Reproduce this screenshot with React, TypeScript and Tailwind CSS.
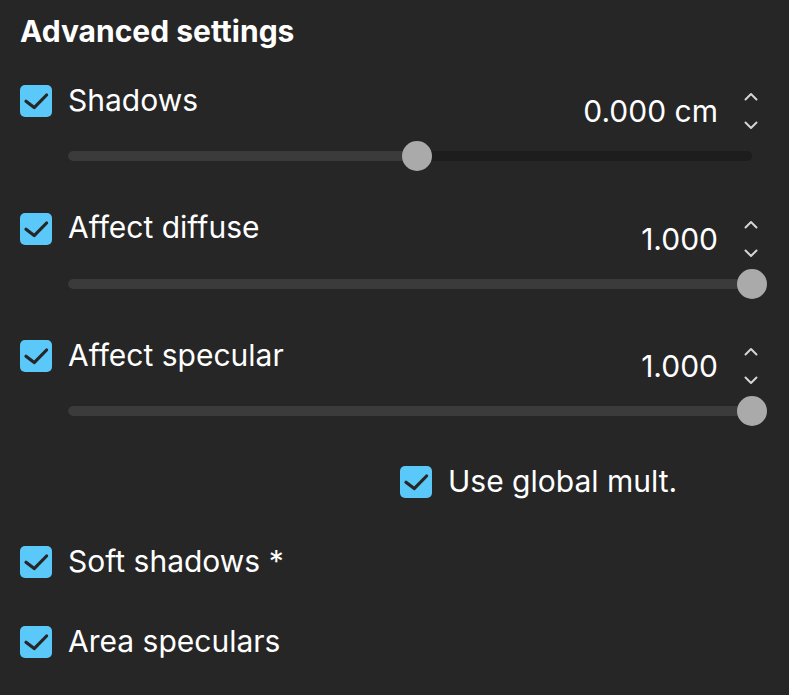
import { useState } from "react";

type SliderRowProps = {
  label: string;
  value: string;
  fraction: number;
};

function CheckBox() {
  return (
    <span className="grid h-8 w-8 shrink-0 place-items-center rounded-[5px] bg-[#5ac8f8]">
      <svg width="32" height="32" viewBox="0 0 32 32" fill="none">
        <path d="M6 16.2 L14.2 22.6 L26.6 10" stroke="#262626" strokeWidth="3.2" strokeLinecap="round" strokeLinejoin="round" />
      </svg>
    </span>
  );
}

function Spinner() {
  return (
    <div className="flex flex-col items-center gap-[20px]">
      <svg width="14" height="9" viewBox="0 0 14 9" fill="none">
        <path d="M1.5 7.5 L7 2 L12.5 7.5" stroke="#d4d4d4" strokeWidth="2" strokeLinecap="round" strokeLinejoin="round" />
      </svg>
      <svg width="14" height="9" viewBox="0 0 14 9" fill="none">
        <path d="M1.5 1.5 L7 7 L12.5 1.5" stroke="#d4d4d4" strokeWidth="2" strokeLinecap="round" strokeLinejoin="round" />
      </svg>
    </div>
  );
}

function SliderRow({ label, value, fraction }: SliderRowProps) {
  return (
    <div>
      <div className="flex items-start justify-between">
        <div className="flex items-center gap-4">
          <CheckBox />
          <span className="-mt-[3px] leading-[32px]">{label}</span>
        </div>
        <div className="mr-[11px] mt-[7px] flex items-center gap-[26px]">
          <span className="leading-[32px]">{value}</span>
          <Spinner />
        </div>
      </div>
      <div className="relative ml-[48px] mr-[17px] mt-[11px] h-[30px]">
        <div className="absolute inset-x-0 top-[10px] h-[10px] rounded-full bg-[#1d1d1d]">
          <div className="h-full rounded-full bg-[#3b3b3b]" style={{ width: `${fraction * 100}%` }} />
        </div>
        <div
          className="absolute top-0 h-[30px] w-[30px] -translate-x-1/2 rounded-full bg-[#aaaaaa]"
          style={{ left: `${fraction * 100}%` }}
        />
      </div>
    </div>
  );
}

function CheckRow({ label }: { label: string }) {
  return (
    <div className="flex items-center gap-4">
      <CheckBox />
      <span className="-mt-[3px] leading-[32px]">{label}</span>
    </div>
  );
}

export default function App() {
  const [rows] = useState([
    { label: "Shadows", value: "0.000 cm", fraction: 0.51 },
    { label: "Affect diffuse", value: "1.000", fraction: 1 },
    { label: "Affect specular", value: "1.000", fraction: 1 }
  ]);

  return (
    <div className="min-h-[695px] w-[789px] bg-[#262626] px-5 pt-[13px] font-['Inter',sans-serif] text-[30px] text-white">
      <h2 className="text-[30px] font-bold leading-[36px]">Advanced settings</h2>

      <div className="mt-[36px] flex flex-col gap-[41.5px]">
        {rows.map((row) => (
          <SliderRow key={row.label} label={row.label} value={row.value} fraction={row.fraction} />
        ))}
      </div>

      <div className="ml-[380px] mt-[40px]">
        <CheckRow label="Use global mult." />
      </div>

      <div className="mt-[48px] flex flex-col gap-[48px]">
        <CheckRow label="Soft shadows *" />
        <CheckRow label="Area speculars" />
      </div>
    </div>
  );
}
